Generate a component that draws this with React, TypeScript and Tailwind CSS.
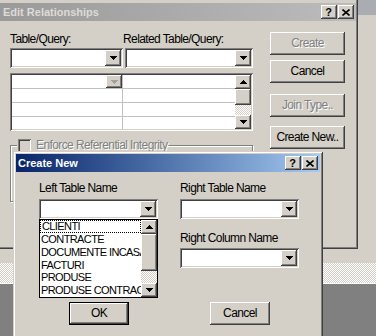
const raised =
  'bg-[#d4d0c8] shadow-[inset_-1px_-1px_#404040,inset_1px_1px_#ffffff,inset_-2px_-2px_#808080,inset_2px_2px_#d4d0c8]';
const sunken =
  'bg-white shadow-[inset_1px_1px_#808080,inset_-1px_-1px_#ffffff,inset_2px_2px_#404040,inset_-2px_-2px_#d4d0c8]';
const hatch =
  'bg-[image:repeating-conic-gradient(#ffffff_0_25%,#d4d0c8_0_50%)] bg-[length:2px_2px]';
const dim = 'text-[#808080] [text-shadow:1px_1px_#ffffff]';

// classic 7x4 pixel arrow
const Arrow = ({ up = false, color = '#000000' }: { up?: boolean; color?: string }) => (
  <svg width="7" height="4" viewBox="0 0 7 4" shapeRendering="crispEdges" className={up ? 'rotate-180' : ''}>
    <rect x="0" y="0" width="7" height="1" fill={color} />
    <rect x="1" y="1" width="5" height="1" fill={color} />
    <rect x="2" y="2" width="3" height="1" fill={color} />
    <rect x="3" y="3" width="1" height="1" fill={color} />
  </svg>
);

const Combo = ({ w }: { w: string }) => (
  <div className={`${w} h-[20px] ${sunken} p-[2px] flex justify-end`}>
    <div className={`w-[16px] h-full ${raised} flex items-center justify-center`}>
      <Arrow />
    </div>
  </div>
);

const Button = ({
  label,
  disabled = false,
  isDefault = false,
  w = 'w-[75px]',
}: {
  label: string;
  disabled?: boolean;
  isDefault?: boolean;
  w?: string;
}) => (
  <div className={`${w} h-[23px] ${isDefault ? 'border border-black' : ''}`}>
    <div className={`w-full h-full ${raised} flex items-center justify-center ${disabled ? dim : 'text-black'}`}>
      {label}
    </div>
  </div>
);

const CaptionButtons = () => (
  <div className="flex gap-[1px]">
    <div className={`w-[16px] h-[14px] ${raised} flex items-center justify-center font-bold text-[11px] leading-none tracking-normal pr-[1px]`}>
      ?
    </div>
    <div className={`w-[16px] h-[14px] ${raised} flex items-center justify-center`}>
      <svg width="8" height="7" viewBox="0 0 8 7">
        <path d="M0.5 0.5 L7.5 6.5 M7.5 0.5 L0.5 6.5" stroke="#000000" strokeWidth="1.6" />
      </svg>
    </div>
  </div>
);

const ScrollBar = ({ thumb, track }: { thumb: string; track: string }) => (
  <div className="w-[16px] h-full flex flex-col">
    <div className={`h-[14px] ${raised} flex items-center justify-center`}>
      <Arrow up />
    </div>
    <div className={`${thumb} ${raised}`} />
    <div className={`${track} ${hatch}`} />
    <div className={`h-[14px] ${raised} flex items-center justify-center`}>
      <Arrow />
    </div>
  </div>
);

const tables = ['CLIENTI', 'CONTRACTE', 'DOCUMENTE INCASARI', 'FACTURI', 'PRODUSE', 'PRODUSE CONTRACTE'];

export default function App() {
  return (
    <div className="relative w-[376px] h-[336px] overflow-hidden bg-[#d4d0c8] font-['Liberation_Sans',Arial,sans-serif] text-[12px] leading-[13px] tracking-[-0.6px] text-black">
      {/* desktop behind the dialogs */}
      <div className="absolute right-0 top-0 w-[18px] h-[15px] bg-[#a9adb2]" />
      <div className="absolute left-0 right-0 top-[263px] bottom-0 flex flex-col">
        <div className={`h-[20px] ${hatch}`} />
        <div className="h-[1px] bg-white" />
        <div className="flex-1 bg-[#808080]" />
      </div>

      {/* Edit Relationships */}
      <div className="absolute left-0 top-0 w-[358px] h-[249px] bg-[#d4d0c8] pt-[3px] pr-[2px] shadow-[inset_-1px_-1px_#404040,inset_-2px_-2px_#808080]">
        <div className="h-[18px] bg-gradient-to-r from-[#9a9a9a] to-[#bcbcbc] flex items-center justify-between pl-[3px] pr-[2px]">
          <span className="font-bold text-[#dedbd6] text-[11px] tracking-normal">Edit Relationships</span>
          <CaptionButtons />
        </div>

        <div className="flex pl-[10px] pt-[11px] gap-[17px]">
          <div className="w-[243px] flex flex-col">
            <div className="flex mt-[1px]">
              <span className="w-[113px]">Table/Query:</span>
              <span>Related Table/Query:</span>
            </div>
            <div className="flex gap-[2px] mt-[2px]">
              <Combo w="w-[113px]" />
              <Combo w="w-[128px]" />
            </div>
            <div className={`mt-[5px] h-[58px] ${sunken} p-[2px] flex`}>
              <div className="flex-1 flex flex-col">
                {[0, 1, 2, 3].map((r) => (
                  <div key={r} className={`flex ${r < 3 ? 'h-[14px] border-b border-[#c0c0c0]' : 'flex-1'}`}>
                    <div className="w-[111px] border-r border-[#c0c0c0] flex justify-end">
                      {r === 0 && (
                        <div className={`w-[16px] h-[13px] ${raised} flex items-center justify-center`}>
                          <Arrow color="#a0a0a0" />
                        </div>
                      )}
                    </div>
                    <div className="flex-1" />
                  </div>
                ))}
              </div>
              <ScrollBar thumb="h-[16px]" track="flex-1" />
            </div>

            <div className="relative mt-[14px] h-[57px] border border-[#808080] shadow-[inset_1px_1px_#ffffff,1px_1px_#ffffff]">
              <div className="absolute left-[6px] -top-[7px] flex items-center gap-[5px] bg-[#d4d0c8] px-[1px]">
                <div className="w-[13px] h-[13px] bg-[#d4d0c8] shadow-[inset_1px_1px_#808080,inset_-1px_-1px_#ffffff,inset_2px_2px_#404040,inset_-2px_-2px_#d4d0c8]" />
                <span className={dim}>Enforce Referential Integrity</span>
              </div>
            </div>
          </div>

          <div className="flex flex-col">
            <Button label="Create" disabled />
            <div className="mt-[5px]">
              <Button label="Cancel" />
            </div>
            <div className="mt-[11px]">
              <Button label="Join Type.." disabled />
            </div>
            <div className="mt-[9px]">
              <Button label="Create New.." />
            </div>
          </div>
        </div>
      </div>

      {/* Create New */}
      <div className="absolute left-[13px] top-[151px] w-[310px] h-[200px] bg-[#d4d0c8] p-[3px] shadow-[inset_1px_1px_#d4d0c8,inset_-1px_-1px_#404040,inset_2px_2px_#ffffff,inset_-2px_-2px_#808080]">
        <div className="h-[18px] bg-gradient-to-r from-[#0a246a] to-[#a6caf0] flex items-center justify-between pl-[2px] pr-[2px]">
          <span className="font-bold text-white text-[11px] tracking-normal">Create New</span>
          <CaptionButtons />
        </div>

        <div className="flex gap-[22px] pl-[23px] pt-[10px]">
          <div className="w-[119px] flex flex-col">
            <span>Left Table Name</span>
            <div className="mt-[4px]">
              <Combo w="w-[119px]" />
            </div>
            <div className="h-[79px] border border-black bg-white flex">
              <div className="flex-1 min-w-0 flex flex-col text-[11px] tracking-[-0.6px]">
                {tables.map((t, i) => (
                  <div
                    key={t}
                    className={`h-[13px] pl-[1px] whitespace-nowrap overflow-hidden ${
                      i === 0 ? 'border border-dotted border-black leading-[11px]' : ''
                    }`}
                  >
                    {t}
                  </div>
                ))}
              </div>
              <ScrollBar thumb="h-[37px]" track="flex-1" />
            </div>
            <div className="mt-[4px] ml-[30px]">
              <Button label="OK" isDefault w="w-[60px]" />
            </div>
          </div>

          <div className="w-[119px] flex flex-col">
            <span>Right Table Name</span>
            <div className="mt-[4px]">
              <Combo w="w-[119px]" />
            </div>
            <span className="mt-[13px]">Right Column Name</span>
            <div className="mt-[3px]">
              <Combo w="w-[119px]" />
            </div>
            <div className="mt-[34px] ml-[30px]">
              <Button label="Cancel" w="w-[60px]" />
            </div>
          </div>
        </div>
      </div>
    </div>
  );
}
